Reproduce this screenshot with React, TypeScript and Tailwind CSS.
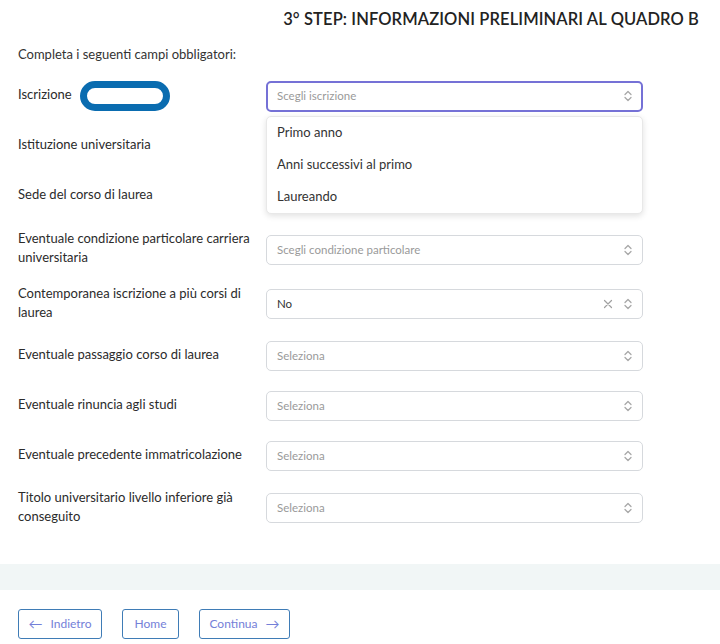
import React from "react";

type Row = {
  label: string;
  h: string;
  placeholder?: string;
  value?: string;
  clearable?: boolean;
  hidden?: boolean;
};

const ROWS: Row[] = [
  { label: "Iscrizione", h: "h-[50px]", placeholder: "Scegli iscrizione" },
  { label: "Istituzione universitaria", h: "h-[50px]", hidden: true },
  { label: "Sede del corso di laurea", h: "h-[50px]", hidden: true },
  { label: "Eventuale condizione particolare carriera universitaria", h: "h-[57px]", placeholder: "Scegli condizione particolare" },
  { label: "Contemporanea iscrizione a più corsi di laurea", h: "h-[52px]", value: "No", clearable: true },
  { label: "Eventuale passaggio corso di laurea", h: "h-[51px]", placeholder: "Seleziona" },
  { label: "Eventuale rinuncia agli studi", h: "h-[50px]", placeholder: "Seleziona" },
  { label: "Eventuale precedente immatricolazione", h: "h-[50px]", placeholder: "Seleziona" },
  { label: "Titolo universitario livello inferiore già conseguito", h: "h-[54px]", placeholder: "Seleziona" },
];

const OPTIONS = ["Primo anno", "Anni successivi al primo", "Laureando"];

function Chevrons() {
  return (
    <svg width="10" height="14" viewBox="0 0 10 14" fill="none" stroke="#a8a8a8" strokeWidth="1.3" strokeLinecap="round" strokeLinejoin="round">
      <path d="M2 5.5 5 2.5 8 5.5" />
      <path d="M2 8.5 5 11.5 8 8.5" />
    </svg>
  );
}

function Cross() {
  return (
    <svg width="10" height="10" viewBox="0 0 10 10" stroke="#a0a0a0" strokeWidth="1.2" strokeLinecap="round">
      <path d="M1.5 1.5 8.5 8.5M8.5 1.5 1.5 8.5" />
    </svg>
  );
}

function Select({ row, focused }: { row: Row; focused?: boolean }) {
  return (
    <div
      className={
        focused
          ? "flex h-[31px] w-[377px] items-center rounded-[5px] border-2 border-[#7571d6] pl-[9px] pr-[8px]"
          : "flex h-[30px] w-[377px] items-center rounded-[5px] border border-[#d6d9dd] pl-[10px] pr-[9px]"
      }
    >
      <span className={row.value ? "flex-1 text-[11.5px] text-[#333]" : "flex-1 text-[11.5px] text-[#9a9a9a]"}>
        {row.value ?? row.placeholder}
      </span>
      {row.clearable && (
        <span className="mr-[10px] flex items-center">
          <Cross />
        </span>
      )}
      <Chevrons />
    </div>
  );
}

export default function App() {
  return (
    <div className="min-h-[644px] w-[720px] bg-white font-['Lato','Noto_Sans',sans-serif] text-[#2b2b2b]">
      <div className="flex h-[38px] items-center justify-end pr-[21px]">
        <h1 className="text-[16.5px] font-semibold tracking-[0.1px] text-[#222]">3° STEP: INFORMAZIONI PRELIMINARI AL QUADRO B</h1>
      </div>

      <div className="px-[18px]">
        <p className="flex h-[33px] items-end pb-[7px] text-[13px] text-[#333]">Completa i seguenti campi obbligatori:</p>

        <div className="flex flex-col">
          {ROWS.map((row, i) => (
            <div key={row.label} className={"relative flex items-center " + row.h}>
              <div className="relative mb-[3px] w-[248px] pr-[8px] text-[13px] leading-[19px] text-[#2b2b2b]">
                {row.label}
                {i === 0 && (
                  <span className="absolute left-[62px] top-[-4px] h-[30px] w-[90px] rounded-full border-[7px] border-[#0a6cb0] bg-white" />
                )}
              </div>
              {!row.hidden && <Select row={row} focused={i === 0} />}
              {i === 0 && (
                <div className="absolute left-[248px] top-[45px] z-10 w-[377px] rounded-[5px] border border-[#e8e8e8] bg-white shadow-[0_2px_6px_rgba(0,0,0,0.12)]">
                  {OPTIONS.map((o) => (
                    <div key={o} className="flex h-[32px] items-center px-[10px] text-[13px] text-[#333]">
                      {o}
                    </div>
                  ))}
                </div>
              )}
            </div>
          ))}
        </div>
      </div>

      <div className="mt-[29px] h-[26px] bg-[#f1f6f6]" />

      <div className="flex gap-[20px] px-[18px] pt-[19px]">
        <button className="flex h-[30px] w-[84px] items-center justify-center gap-[8px] rounded-[3px] border border-[#3f7cb6] text-[12px] text-[#7480d8]">
          <span className="text-[14px] leading-none">←</span>
          Indietro
        </button>
        <button className="flex h-[30px] w-[57px] items-center justify-center rounded-[3px] border border-[#3f7cb6] text-[12px] text-[#7480d8]">
          Home
        </button>
        <button className="flex h-[30px] w-[91px] items-center justify-center gap-[8px] rounded-[3px] border border-[#3f7cb6] text-[12px] text-[#7480d8]">
          Continua
          <span className="text-[14px] leading-none">→</span>
        </button>
      </div>
    </div>
  );
}
